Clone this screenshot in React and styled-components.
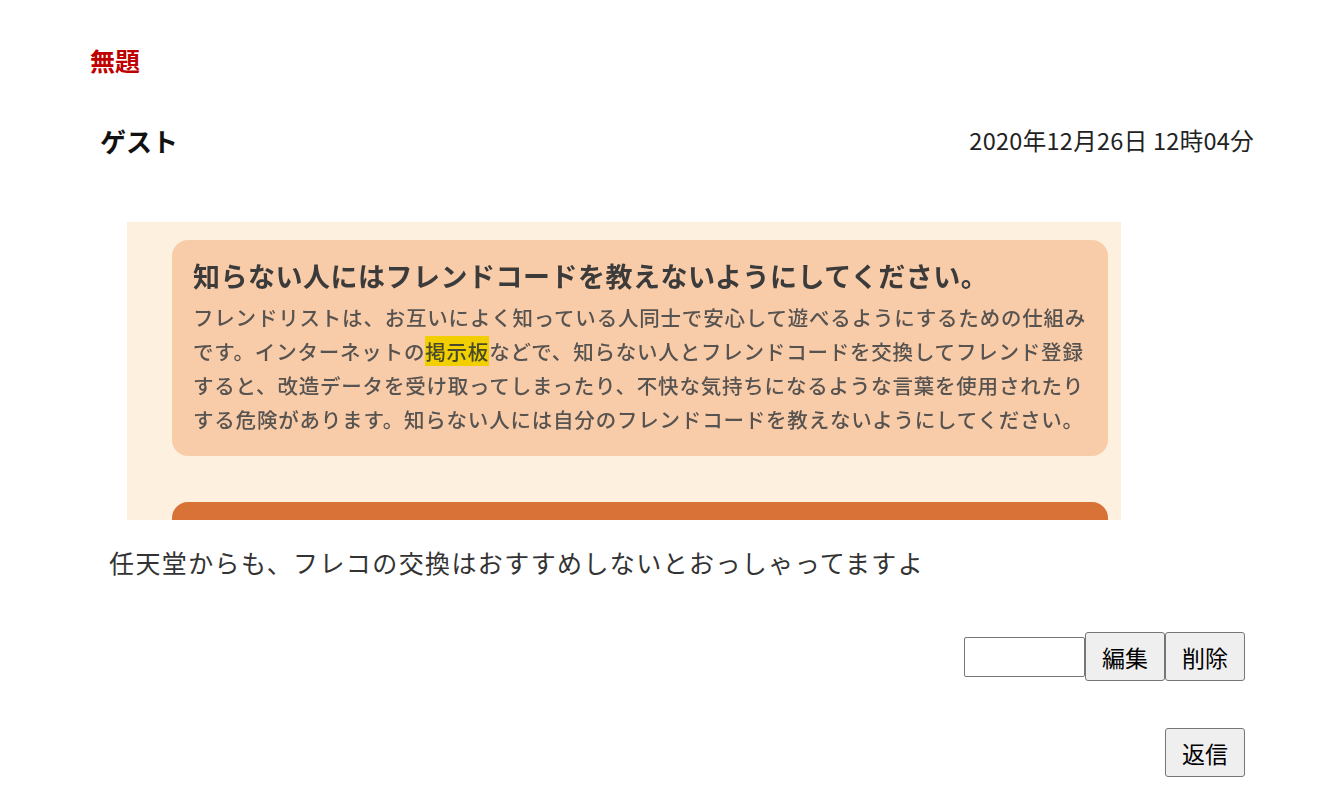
import styled, { createGlobalStyle } from "styled-components";

const GlobalStyle = createGlobalStyle`
  html, body {
    margin: 0;
    padding: 0;
    background: #fff;
  }
  body {
    font-family: "Noto Sans CJK JP", "Noto Sans", sans-serif;
    color: #222;
  }
`;

const Page = styled.div`
  padding: 42px 82px 0 90px;
  width: 1327px;
  box-sizing: border-box;
`;

const Title = styled.h1`
  margin: 0;
  font-size: 25px;
  line-height: 36px;
  font-weight: 700;
  color: #c00000;
`;

const Header = styled.div`
  display: flex;
  justify-content: space-between;
  align-items: center;
  height: 40px;
  margin: 42px -9px 0 0;
  padding: 0 0 0 10px;
`;

const Author = styled.span`
  font-size: 26px;
  font-weight: 700;
  color: #111;
`;

const Posted = styled.span`
  font-size: 23.5px;
  color: #222;
  letter-spacing: 0.3px;
`;

const Shot = styled.div`
  margin: 62px 0 0 37px;
  width: 994px;
  height: 298px;
  background: #fdf0df;
  overflow: hidden;
  padding: 18px 0 0 45px;
  box-sizing: border-box;
  filter: blur(0.4px);
`;

const Notice = styled.div`
  width: 936px;
  height: 216px;
  box-sizing: border-box;
  border-radius: 16px;
  background: ${({ tone }) => tone};
  padding: 18px 0 0 21px;
  margin-bottom: ${({ gap }) => gap || 0}px;
`;

const NoticeTitle = styled.div`
  font-size: 27px;
  line-height: 36px;
  font-weight: 700;
  color: #3b3b3b;
  white-space: nowrap;
  letter-spacing: 0.5px;
  margin-bottom: 6px;
`;

const NoticeLine = styled.div`
  font-size: 20.5px;
  line-height: 34px;
  font-weight: 500;
  color: #575350;
  white-space: nowrap;
  letter-spacing: 0.8px;
`;

const Mark = styled.span`
  background: #f2cf00;
  color: #4a4a2a;
`;

const Comment = styled.p`
  margin: 24px 0 0 19px;
  font-size: 25px;
  line-height: 36px;
  color: #333;
  letter-spacing: 1.4px;
`;

const Actions = styled.div`
  display: flex;
  justify-content: flex-end;
  align-items: center;
  margin-top: ${({ top }) => top}px;
`;

const KeyInput = styled.input`
  width: 121px;
  height: 40px;
  box-sizing: border-box;
  border: 1px solid #767676;
  border-radius: 2px;
  padding: 0 4px;
  font-size: 20px;
  margin: 0;
`;

const Button = styled.button`
  width: 80px;
  height: 49px;
  box-sizing: border-box;
  margin: 0;
  padding: 0;
  border: 1px solid #767676;
  border-radius: 3px;
  background: #efefef;
  color: #000;
  font-family: "Noto Sans CJK JP", sans-serif;
  font-size: 23px;
  cursor: pointer;
`;

export default function App() {
  return (
    <>
      <GlobalStyle />
      <Page>
        <Title>無題</Title>
        <Header>
          <Author>ゲスト</Author>
          <Posted>2020年12月26日 12時04分</Posted>
        </Header>
        <Shot>
          <Notice tone="#f9cca9" gap={46}>
            <NoticeTitle>知らない人にはフレンドコードを教えないようにしてください。</NoticeTitle>
            <NoticeLine>フレンドリストは、お互いによく知っている人同士で安心して遊べるようにするための仕組み</NoticeLine>
            <NoticeLine>
              です。インターネットの<Mark>掲示板</Mark>などで、知らない人とフレンドコードを交換してフレンド登録
            </NoticeLine>
            <NoticeLine>すると、改造データを受け取ってしまったり、不快な気持ちになるような言葉を使用されたり</NoticeLine>
            <NoticeLine>する危険があります。知らない人には自分のフレンドコードを教えないようにしてください。</NoticeLine>
          </Notice>
          <Notice tone="#d87236" />
        </Shot>
        <Comment>任天堂からも、フレコの交換はおすすめしないとおっしゃってますよ</Comment>
        <Actions top={52}>
          <KeyInput type="password" />
          <Button>編集</Button>
          <Button>削除</Button>
        </Actions>
        <Actions top={47}>
          <Button>返信</Button>
        </Actions>
      </Page>
    </>
  );
}
